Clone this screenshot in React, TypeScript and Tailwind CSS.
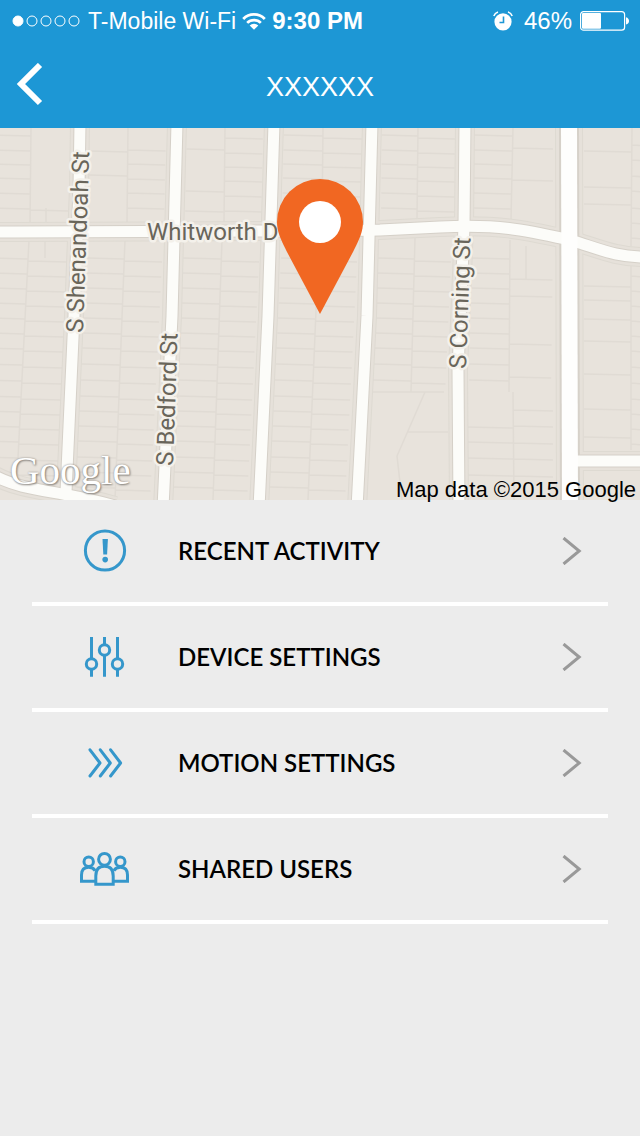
import type { ReactNode } from "react";

type Parcel = {
  spine: [number, number];
  reach: [number, number];
  top: number;
  bottom: number;
  lean: number;
  left: number[];
  right: number[];
};

const roads = [
  "M80 -5 79 60 74 188 66 364",
  "M177 -5 172 188 163 380",
  "M274 -5 268 188 259 380",
  "M372 -5 367 188 357 380",
  "M465 -5 464 98 458 242 459 380",
  "M-5 104 C120 103 250 104 380 102 L440 99 C500 96 525 102 570 112 C600 121 615 129 645 129",
  "M570 333H650",
  "M-5 348 C25 364 60 362 115 378",
];

const upper = [8, 23, 37, 51, 66, 81];
const lower = [131, 146, 161, 176, 191, 206, 221, 237, 253, 269, 284, 299, 314, 330, 345, 360];
const sparse = [125, 159, 173, 192, 214, 247, 282, 310, 342];

const parcels: Parcel[] = [
  { spine: [31, 30], reach: [-10, 68], top: 0, bottom: 97, lean: 0, left: upper, right: [80] },
  { spine: [29, 17], reach: [-10, 68], top: 112, bottom: 350, lean: -10, left: lower, right: lower },
  { spine: [128, 127], reach: [90, 166], top: 0, bottom: 94, lean: -2, left: [24, 48], right: [20, 34, 49, 63, 78] },
  { spine: [125, 115], reach: [88, 163], top: 112, bottom: 372, lean: -13, left: lower, right: lower },
  { spine: [225, 224], reach: [187, 263], top: 0, bottom: 94, lean: -2, left: [22, 64, 84], right: upper },
  { spine: [222, 213], reach: [184, 260], top: 112, bottom: 372, lean: -13, left: lower, right: lower },
  { spine: [323, 322], reach: [284, 362], top: 0, bottom: 94, lean: -2, left: upper, right: upper },
  { spine: [319, 308], reach: [282, 358], top: 112, bottom: 372, lean: -13, left: lower, right: lower },
  { spine: [418, 417], reach: [382, 455], top: 0, bottom: 90, lean: -1, left: upper, right: upper },
  { spine: [415, 411], reach: [379, 452], top: 110, bottom: 264, lean: -7, left: lower.slice(0, 10), right: lower.slice(0, 10) },
  { spine: [513, 511], reach: [474, 553], top: 0, bottom: 92, lean: 0, left: upper, right: [18, 50] },
  { spine: [510, 509], reach: [471, 553], top: 112, bottom: 264, lean: -2, left: lower.slice(0, 9), right: [149, 166, 214, 247] },
  { spine: [513, 514], reach: [467, 553], top: 264, bottom: 372, lean: 0, left: [300, 315, 331, 348], right: [280, 296, 313, 329, 346] },
  { spine: [632, 631], reach: [584, 645], top: 0, bottom: 118, lean: 0, left: [24, 60, 77], right: [15, 30, 46, 61, 78, 93, 108] },
  { spine: [631, 631], reach: [584, 645], top: 138, bottom: 322, lean: 0, left: sparse.slice(1, 8), right: lower.slice(1, 13) },
];

function parcelPath(p: Parcel) {
  const height = p.bottom - p.top;
  const along = (y: number) => (y - p.top) / height;
  const spineX = (y: number) => p.spine[0] + (p.spine[1] - p.spine[0]) * along(y);
  const lines = [`M${p.spine[0]} ${p.top}L${p.spine[1]} ${p.bottom}`];
  p.left
    .filter((y) => y < p.bottom)
    .forEach((y) => lines.push(`M${p.reach[0] + p.lean * along(y)} ${y - 1}L${spineX(y)} ${y}`));
  p.right
    .filter((y) => y < p.bottom)
    .forEach((y) => lines.push(`M${spineX(y)} ${y + 2}L${p.reach[1] + p.lean * along(y)} ${y + 3}`));
  return lines.join("");
}

function StreetMap() {
  return (
    <svg
      viewBox="0 0 640 372"
      preserveAspectRatio="xMidYMid slice"
      className="block h-[372px] w-full"
      role="img"
      aria-label="Street map"
    >
      <rect width="640" height="372" fill="#e8e3dc" />
      <g fill="none" stroke="#e0dbd4" strokeWidth="1.5">
        {parcels.map((p, i) => (
          <path key={i} d={parcelPath(p)} />
        ))}
        <path d="M46 80V96M45 112V130M372 264H444M425 264 397 328 402 372M408 304H448M526 118V152" />
      </g>
      <g fill="none">
        {roads.map((d) => (
          <path key={d} d={d} stroke="#dedad2" strokeWidth="20" />
        ))}
        <path d="M569 -5 570 380" stroke="#dedad2" strokeWidth="28" />
        {roads.map((d) => (
          <path key={d} d={d} stroke="#e6e1da" strokeWidth="18" />
        ))}
        <path d="M569 -5 570 380" stroke="#e6e1da" strokeWidth="26" />
        {roads.map((d) => (
          <path key={d} d={d} stroke="#d5d0c8" strokeWidth="13" />
        ))}
        <path d="M569 -5 570 380" stroke="#d6d1c9" strokeWidth="20" />
        {roads.map((d) => (
          <path key={d} d={d} stroke="#fcfcf9" strokeWidth="11" />
        ))}
        <path d="M569 -5 570 380" stroke="#fefefd" strokeWidth="16" />
      </g>
      <g
        className="font-['Roboto',sans-serif] text-[24px]"
        fill="#69655a"
        stroke="#f4f1eb"
        strokeWidth="5"
        strokeLinejoin="round"
        paintOrder="stroke"
      >
        <text x="147" y="112">Whitworth D</text>
        <text transform="translate(83 205) rotate(-88)">S Shenandoah St</text>
        <text transform="translate(173 338) rotate(-88)">S Bedford St</text>
        <text transform="translate(466 241) rotate(-88)">S Corning St</text>
      </g>
      <path
        d="M320 186 287 124C280 110 277 103 277 94A43 43 0 0 1 363 94C363 103 360 110 353 124Z"
        fill="#f16722"
      />
      <circle cx="320" cy="94" r="21" fill="#fff" />
    </svg>
  );
}

function LineIcon({ children }: { children: ReactNode }) {
  return (
    <svg
      width="50"
      height="50"
      viewBox="0 0 50 50"
      fill="none"
      stroke="#3597cb"
      strokeWidth="3"
      aria-hidden="true"
    >
      {children}
    </svg>
  );
}

const items: { label: string; icon: ReactNode }[] = [
  {
    label: "RECENT ACTIVITY",
    icon: (
      <LineIcon>
        <circle cx="25" cy="24.5" r="19.6" />
        <path d="M22.5 13h5.4l-.8 15.4h-3.8z" fill="#3597cb" stroke="none" />
        <circle cx="25.2" cy="33.6" r="2.8" fill="#3597cb" stroke="none" />
      </LineIcon>
    ),
  },
  {
    label: "DEVICE SETTINGS",
    icon: (
      <LineIcon>
        <path d="M11.5 5v21.5M11.5 37.5v7.3M24.5 5v7.5M24.5 23.5v21.3M37.5 5v21.5M37.5 37.5v7.3" />
        <circle cx="11.5" cy="32" r="5.2" />
        <circle cx="24.5" cy="18" r="5.2" />
        <circle cx="37.5" cy="32" r="5.2" />
      </LineIcon>
    ),
  },
  {
    label: "MOTION SETTINGS",
    icon: (
      <LineIcon>
        <path
          d="M10 11.8 20 25 10 38M20.3 11.8 30.3 25 20.3 38M30.6 11.8 40.6 25 30.6 38"
          strokeLinecap="round"
          strokeLinejoin="round"
        />
      </LineIcon>
    ),
  },
  {
    label: "SHARED USERS",
    icon: (
      <LineIcon>
        <circle cx="24.5" cy="15.3" r="5.9" />
        <circle cx="8.7" cy="17.7" r="4.7" />
        <circle cx="40.3" cy="17.7" r="4.7" />
        <path d="M15.8 40.3V32c0-6.2 3.2-9.7 8.7-9.7s8.7 3.5 8.7 9.7v8.3z" />
        <path d="M15 37.3H1.5V31c0-5 2.6-7.7 7.2-7.7 2.9 0 5.2 1.2 6.4 3.4" />
        <path d="M34 37.3h13.5V31c0-5-2.6-7.7-7.2-7.7-2.9 0-5.2 1.2-6.4 3.4" />
      </LineIcon>
    ),
  },
];

function StatusBar() {
  return (
    <div className="flex h-[42px] items-center justify-between pr-[11px] pl-3 font-['Liberation_Sans',Arial,sans-serif]">
      <div className="flex items-center gap-[6px]">
        <svg width="70" height="12" viewBox="0 0 70 12" fill="none" stroke="#fff" aria-hidden="true">
          <circle cx="6" cy="6" r="5" fill="#fff" />
          <circle cx="20" cy="6" r="5" />
          <circle cx="34" cy="6" r="5" />
          <circle cx="48" cy="6" r="5" />
          <circle cx="62" cy="6" r="5" />
        </svg>
        <span className="text-[23px] leading-7">T-Mobile Wi-Fi</span>
        <svg width="24" height="19" viewBox="0 0 26 20" fill="none" stroke="#fff" strokeWidth="3" aria-hidden="true">
          <path d="M1.3 7.2a16.5 16.5 0 0 1 23.4 0" />
          <path d="M5.6 11.5a10.5 10.5 0 0 1 14.8 0" />
          <path d="M13 19 8.3 14.3a6.7 6.7 0 0 1 9.4 0z" fill="#fff" stroke="none" />
        </svg>
        <span className="text-[24px] leading-7 font-bold">9:30 PM</span>
      </div>
      <div className="flex items-center gap-2">
        <svg width="20" height="20" viewBox="0 0 20 20" fill="none" aria-hidden="true">
          <circle cx="10" cy="10.8" r="8.6" fill="#fff" />
          <path d="M.8 5A6.5 6.5 0 0 1 5 1M19.2 5A6.5 6.5 0 0 0 15 1" stroke="#fff" strokeWidth="1.6" />
          <path d="M10.5 5.5v6H6.5" stroke="#1d97d5" strokeWidth="1.6" />
        </svg>
        <span className="pl-[3px] text-[24px] leading-7">46%</span>
        <svg width="49" height="20" viewBox="0 0 49 20" fill="none" aria-hidden="true">
          <rect x=".6" y=".6" width="44" height="18.6" rx="3" stroke="#fff" strokeWidth="1.2" />
          <rect x="2" y="2" width="19" height="15.8" rx="1" fill="#fff" />
          <path d="M46 6.3c4 1 4 6.2 0 7.2z" fill="#fff" />
        </svg>
      </div>
    </div>
  );
}

export default function App() {
  return (
    <div className="min-h-screen bg-[#ececec]">
      <header className="bg-[#1d97d5] text-white">
        <StatusBar />
        <div className="grid h-[86px] grid-cols-[1fr_auto_1fr] items-center px-4">
          <button type="button" aria-label="Back" className="justify-self-start">
            <svg width="28" height="44" viewBox="0 0 28 44" fill="none" stroke="#fff" strokeWidth="6" aria-hidden="true">
              <path d="M24 2 5 21l19 19" />
            </svg>
          </button>
          <h1 className="pt-1 font-['Liberation_Sans',Arial,sans-serif] text-[27px] leading-8">XXXXXX</h1>
        </div>
      </header>
      <main>
        <section className="relative" aria-label="Location">
          <StreetMap />
          <span className="absolute bottom-[6px] left-[10px] font-['Liberation_Serif',serif] text-[41px] leading-12 text-white [text-shadow:0_0_2px_#8a8680,1px_1px_2px_#8a8680]">
            Google
          </span>
          <span className="absolute right-1 -bottom-[2px] font-['Liberation_Sans',Arial,sans-serif] text-[22px] leading-6 text-black">
            Map data ©2015 Google
          </span>
        </section>
        <nav aria-label="Settings">
          <ul className="mx-8">
            {items.map((item) => (
              <li key={item.label} className="border-b-4 border-white">
                <button type="button" className="flex h-[102px] w-full items-center pr-[26px] text-left">
                  <span className="flex w-[146px] shrink-0 justify-center">{item.icon}</span>
                  <span className="grow font-['Lato',sans-serif] text-[24px] leading-8 font-semibold text-black">
                    {item.label}
                  </span>
                  <svg width="20" height="28" viewBox="0 0 20 28" fill="none" stroke="#999" strokeWidth="3" aria-hidden="true">
                    <path d="M1.5 1 17.2 14 1.5 27" />
                  </svg>
                </button>
              </li>
            ))}
          </ul>
        </nav>
      </main>
    </div>
  );
}
